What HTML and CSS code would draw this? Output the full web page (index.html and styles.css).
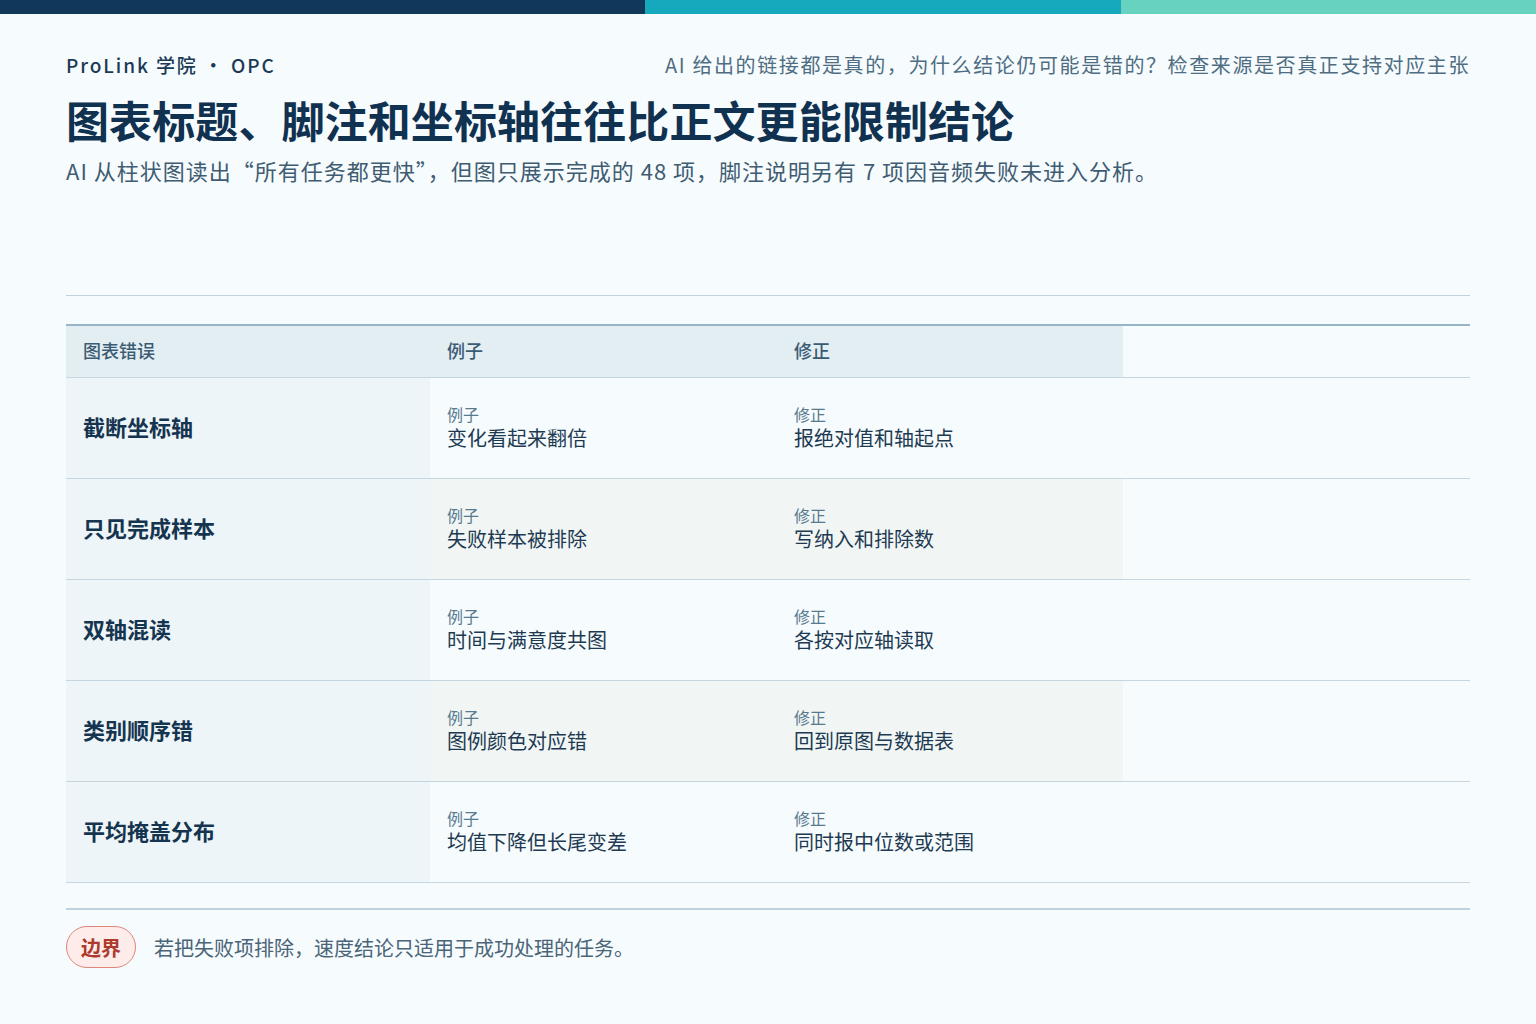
FILE: index.html
```html
<!DOCTYPE html>
<html lang="zh-CN">
<head>
<meta charset="utf-8">
<link rel="stylesheet" href="styles.css">
</head>
<body>
<div class="topbar"><span class="seg s1"></span><span class="seg s2"></span><span class="seg s3"></span></div>
<main class="page">
  <header class="meta">
    <div class="brand">ProLink 学院 · OPC</div>
    <div class="question">AI 给出的链接都是真的，为什么结论仍可能是错的？检查来源是否真正支持对应主张</div>
  </header>
  <h1 class="title">图表标题、脚注和坐标轴往往比正文更能限制结论</h1>
  <p class="subtitle">AI 从柱状图读出“所有任务都更快”，但图只展示完成的 48 项，脚注说明另有 7 项因音频失败未进入分析。</p>
  <div class="rule"></div>
  <div class="table">
    <div class="row head">
      <div class="cell c1">图表错误</div>
      <div class="cell c2">例子</div>
      <div class="cell c3">修正</div>
      <div class="cell c4"></div>
    </div>
    <div class="row">
      <div class="cell c1 name">截断坐标轴</div>
      <div class="cell c2"><span class="lab">例子</span><span class="val">变化看起来翻倍</span></div>
      <div class="cell c3"><span class="lab">修正</span><span class="val">报绝对值和轴起点</span></div>
      <div class="cell c4"></div>
    </div>
    <div class="row alt">
      <div class="cell c1 name">只见完成样本</div>
      <div class="cell c2"><span class="lab">例子</span><span class="val">失败样本被排除</span></div>
      <div class="cell c3"><span class="lab">修正</span><span class="val">写纳入和排除数</span></div>
      <div class="cell c4"></div>
    </div>
    <div class="row">
      <div class="cell c1 name">双轴混读</div>
      <div class="cell c2"><span class="lab">例子</span><span class="val">时间与满意度共图</span></div>
      <div class="cell c3"><span class="lab">修正</span><span class="val">各按对应轴读取</span></div>
      <div class="cell c4"></div>
    </div>
    <div class="row alt">
      <div class="cell c1 name">类别顺序错</div>
      <div class="cell c2"><span class="lab">例子</span><span class="val">图例颜色对应错</span></div>
      <div class="cell c3"><span class="lab">修正</span><span class="val">回到原图与数据表</span></div>
      <div class="cell c4"></div>
    </div>
    <div class="row">
      <div class="cell c1 name">平均掩盖分布</div>
      <div class="cell c2"><span class="lab">例子</span><span class="val">均值下降但长尾变差</span></div>
      <div class="cell c3"><span class="lab">修正</span><span class="val">同时报中位数或范围</span></div>
      <div class="cell c4"></div>
    </div>
  </div>
  <div class="rule2"></div>
  <footer class="note">
    <span class="pill">边界</span>
    <span class="notetext">若把失败项排除，速度结论只适用于成功处理的任务。</span>
  </footer>
</main>
</body>
</html>
```

FILE: styles.css
```css
html, body {
  margin: 0;
  padding: 0;
  background: #f6fbfd;
  font-family: "Noto Sans CJK SC", "Noto Sans", sans-serif;
}
.topbar {
  display: flex;
  height: 14px;
}
.seg { display: block; height: 100%; }
.s1 { width: 645px; background: #11385b; }
.s2 { width: 476px; background: #16a8bd; }
.s3 { flex: 1; background: #67d2c0; }

.page {
  padding: 39px 66px 0 66px;
  display: flex;
  flex-direction: column;
}
.meta {
  display: flex;
  justify-content: space-between;
  align-items: center;
  height: 24px;
}
.brand {
  font-size: 19px;
  font-weight: 500;
  letter-spacing: 1.9px;
  color: #1b3a55;
  line-height: 24px;
}
.question {
  font-size: 20px;
  letter-spacing: 1.6px;
  color: #4f6d82;
  line-height: 24px;
  margin-right: 0;
}
.title {
  margin: 14px 0 0 0;
  font-size: 43px;
  line-height: 56px;
  font-weight: 700;
  color: #10314f;
  letter-spacing: 0.1px;
}
.subtitle {
  margin: 8px 0 0 0;
  font-size: 22px;
  line-height: 30px;
  letter-spacing: 1px;
  color: #3f5c72;
}
.rule {
  margin-top: 110px;
  height: 1px;
  background: #bfd2de;
}
.table {
  margin-top: 28px;
  border-top: 2px solid #97b5c7;
}
.row {
  display: grid;
  grid-template-columns: 364px 347px 346px 1fr;
  height: 101px;
  border-bottom: 1px solid #c5d6e0;
  box-sizing: border-box;
}
.row.head {
  height: 52px;
}
.row.tall { height: 102px; }
.cell {
  padding: 0 17px;
  display: flex;
  flex-direction: column;
  justify-content: center;
}
.head .c1, .head .c2, .head .c3 {
  background: #e3eef3;
}
.head .cell {
  font-size: 18px;
  font-weight: 500;
  color: #3b5b73;
  padding-bottom: 3px;
}
.c1.name {
  background: #edf5f8;
  font-size: 22px;
  font-weight: 700;
  color: #15344f;
  padding-bottom: 4px;
}
.alt .c2, .alt .c3 {
  background: #f1f6f5;
}
.lab {
  font-size: 16px;
  line-height: 20px;
  color: #587a8f;
}
.val {
  font-size: 20px;
  line-height: 28px;
  color: #1d3a52;
}
.rule2 {
  margin-top: 25px;
  height: 2px;
  background: #bfd2de;
}
.note {
  margin-top: 16px;
  display: flex;
  align-items: center;
  gap: 18px;
}
.pill {
  display: inline-flex;
  align-items: center;
  justify-content: center;
  width: 70px;
  height: 42px;
  box-sizing: border-box;
  border: 1px solid #e0877a;
  border-radius: 21px;
  background: #fdecea;
  color: #ae3a2e;
  font-size: 20px;
  font-weight: 700;
}
.notetext {
  font-size: 20px;
  color: #4a6478;
}
```
